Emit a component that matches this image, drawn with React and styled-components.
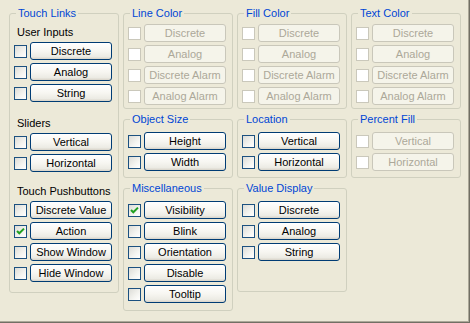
import React from 'react';
import styled, { createGlobalStyle } from 'styled-components';

const GlobalStyle = createGlobalStyle`
    html, body {
        margin: 0;
        padding: 0;
        background: #ECE9D8;
    }
    body {
        font-family: "Liberation Sans", Arial, sans-serif;
        font-size: 11px;
    }
`

const touchLinks = [
    { title: 'User Inputs', top: 0, items: [['Discrete'], ['Analog'], ['String']] },
    { title: 'Sliders', top: 12, items: [['Vertical'], ['Horizontal']] },
    { title: 'Touch Pushbuttons', top: 10, items: [['Discrete Value'], ['Action', true], ['Show Window'], ['Hide Window']] },
]

const alarms = ['Discrete', 'Analog', 'Discrete Alarm', 'Analog Alarm']

function Check({ checked, disabled }) {
    return (
        <Box $disabled={disabled}>
            {checked && (
                <svg width="11" height="11" viewBox="0 0 11 11">
                    <path d="M2 5 L4.3 7.3 L9 2.6" fill="none" stroke="#21A121" strokeWidth="2" />
                </svg>
            )}
        </Box>
    )
}

function Option({ label, checked, disabled }) {
    return (
        <Row>
            <Check checked={checked} disabled={disabled} />
            <Button disabled={disabled}>{label}</Button>
        </Row>
    )
}

function Group({ title, height, top, children }) {
    return (
        <Frame $h={height}>
            <Legend>{title}</Legend>
            <Body $top={top}>{children}</Body>
        </Frame>
    )
}

export default function App() {
    return (
        <>
            <GlobalStyle />
            <Dialog>
                <Column>
                    <Group title="Touch Links" height={287} top={6}>
                        {touchLinks.map(section => (
                            <React.Fragment key={section.title}>
                                <SubLabel $top={section.top}>{section.title}</SubLabel>
                                {section.items.map(([label, checked]) => (
                                    <Option key={label} label={label} checked={checked} />
                                ))}
                            </React.Fragment>
                        ))}
                    </Group>
                </Column>
                <Column>
                    <Group title="Line Color" height={103} top={4}>
                        {alarms.map(a => <Option key={a} label={a} disabled />)}
                    </Group>
                    <Group title="Object Size" height={66} top={6}>
                        <Option label="Height" />
                        <Option label="Width" />
                    </Group>
                    <Group title="Miscellaneous" height={130} top={6}>
                        <Option label="Visibility" checked />
                        <Option label="Blink" />
                        <Option label="Orientation" />
                        <Option label="Disable" />
                        <Option label="Tooltip" />
                    </Group>
                </Column>
                <Column>
                    <Group title="Fill Color" height={103} top={4}>
                        {alarms.map(a => <Option key={a} label={a} disabled />)}
                    </Group>
                    <Group title="Location" height={66} top={6}>
                        <Option label="Vertical" />
                        <Option label="Horizontal" />
                    </Group>
                    <Group title="Value Display" height={111} top={6}>
                        <Option label="Discrete" />
                        <Option label="Analog" />
                        <Option label="String" />
                    </Group>
                </Column>
                <Column>
                    <Group title="Text Color" height={103} top={4}>
                        {alarms.map(a => <Option key={a} label={a} disabled />)}
                    </Group>
                    <Group title="Percent Fill" height={66} top={6}>
                        <Option label="Vertical" disabled />
                        <Option label="Horizontal" disabled />
                    </Group>
                </Column>
            </Dialog>
        </>
    )
}

const Dialog = styled.div`
    width: 470px;
    height: 323px;
    box-sizing: border-box;
    background: #ECE9D8;
    padding: 6px 0 0 9px;
    display: grid;
    grid-template-columns: repeat(4, 110px);
    column-gap: 4px;
    align-items: start;
    box-shadow: inset -1px -1px 0 #716F64, inset -2px -2px 0 #ACA899;
`
const Column = styled.div`
    display: flex;
    flex-direction: column;
    gap: 3px;
`
const Frame = styled.fieldset`
    margin: 0;
    padding: 0;
    min-width: 0;
    box-sizing: border-box;
    height: ${p => p.$h}px;
    border: 1px solid #D0D0BF;
    border-radius: 3px;
`
const Legend = styled.legend`
    margin-left: 6px;
    padding: 0 2px;
    color: #0046D5;
    font-size: 11px;
    line-height: 14px;
`
const Body = styled.div`
    padding: ${p => p.$top}px 6px 0 4px;
    display: flex;
    flex-direction: column;
    gap: 3px;
`
const SubLabel = styled.div`
    margin-top: ${p => p.$top}px;
    padding-left: 3px;
    line-height: 13px;
    color: #000000;
`
const Row = styled.div`
    display: flex;
    align-items: flex-start;
    gap: 3px;
`
const Box = styled.span`
    width: 13px;
    height: 13px;
    margin-top: 3px;
    box-sizing: border-box;
    display: flex;
    align-items: center;
    justify-content: center;
    border: 1px solid ${p => p.$disabled ? '#CAC8BB' : '#1C5180'};
    background: ${p => p.$disabled ? '#FFFFFF' : 'linear-gradient(135deg, #DCDCD7 0%, #F4F4F0 60%, #FFFFFF 100%)'};
`
const Button = styled.button`
    width: 82px;
    height: 18px;
    box-sizing: border-box;
    padding: 0;
    margin: 0;
    font-family: "Liberation Sans", Arial, sans-serif;
    font-size: 11px;
    line-height: 16px;
    border-radius: 3px;
    border: 1px solid ${p => p.disabled ? '#C9C7BA' : '#003C74'};
    color: ${p => p.disabled ? '#ACA899' : '#000000'};
    background: ${p => p.disabled ? '#F5F4EA' : 'linear-gradient(#FFFFFF 0%, #F7F6F1 50%, #ECEBE4 85%, #D8D3C8 100%)'};
    box-shadow: ${p => p.disabled ? 'none' : 'inset 0 1px 0 #FFFFFF'};
`
